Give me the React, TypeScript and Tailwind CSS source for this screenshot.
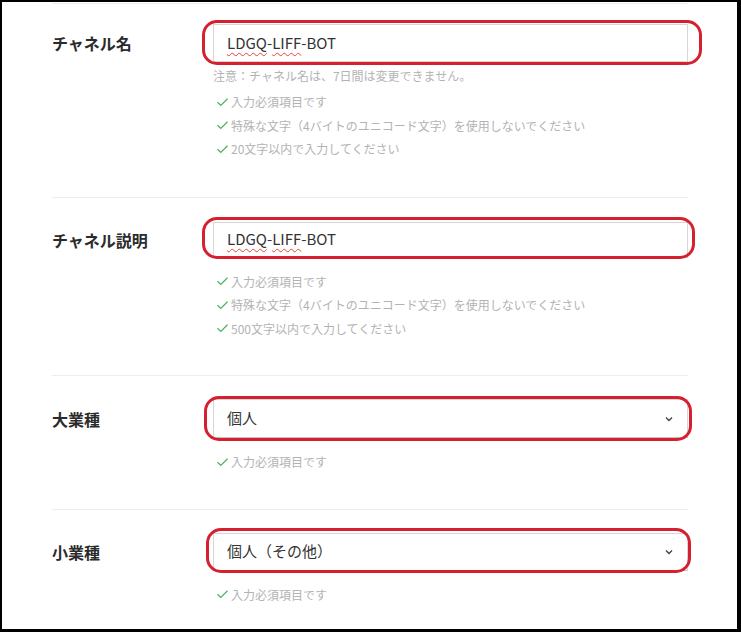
import type { ReactNode } from 'react';

function Check() {
  return (
    <svg width="13" height="12" viewBox="0 0 13 12" className="mr-[2px] shrink-0">
      <path d="M1.5 6.2 L4.8 9.4 L11.5 2.8" fill="none" stroke="#4caf61" strokeWidth="1.2" />
    </svg>
  );
}

function Hints({ items, className }: { items: string[]; className: string }) {
  return (
    <ul className={className}>
      {items.map((t) => (
        <li key={t} className="flex items-center text-[12px] leading-[23.5px] text-[#b3b3b3] pl-[3px]">
          <Check />
          {t}
        </li>
      ))}
    </ul>
  );
}

function Row({
  label,
  field,
  redClass,
  rowClass,
  labelBox,
  children,
}: {
  label: string;
  field: ReactNode;
  redClass: string;
  rowClass: string;
  labelBox: string;
  children: ReactNode;
}) {
  return (
    <div className={`flex border-t border-[#ededed] ${rowClass}`}>
      <div className="w-[161px] shrink-0">
        <div className={`flex items-center text-[16px] font-bold text-[#2b2b2b] ${labelBox}`}>{label}</div>
      </div>
      <div className="w-[475px]">
        <div className="relative">
          {field}
          <div className={`absolute rounded-[15px] border-[3px] border-[#d5202f] pointer-events-none ${redClass}`} />
        </div>
        {children}
      </div>
    </div>
  );
}

function TextBox({ h }: { h: string }) {
  return (
    <div className={`flex items-center border border-[#d6d6d6] bg-white px-[13px] text-[15px] text-[#333] ${h}`}>
      <span className="underline decoration-wavy decoration-[#e0463c] decoration-1 underline-offset-[3px]">LDGQ</span>
      -
      <span className="underline decoration-wavy decoration-[#e0463c] decoration-1 underline-offset-[3px]">LIFF</span>
      -BOT
    </div>
  );
}

function SelectBox({ h, value }: { h: string; value: string }) {
  return (
    <div className={`flex items-center justify-between border border-[#d6d6d6] border-b-[#c4c4c4] bg-white pl-[13px] pr-[14px] text-[15px] text-[#333] ${h}`}>
      <span>{value}</span>
      <svg width="8" height="6" viewBox="0 0 8 6">
        <path d="M1 1.5 L4 4.5 L7 1.5" fill="none" stroke="#444" strokeWidth="1.4" />
      </svg>
    </div>
  );
}

export default function App() {
  return (
    <div className="w-[741px] h-[632px] overflow-hidden bg-white border-t-2 border-l-2 border-r-4 border-b-[3px] border-black font-['Noto_Sans_CJK_JP','Noto_Sans',sans-serif]">
      <div className="ml-[50px] mt-px w-[636px]">
        <Row
          label="チャネル名"
          rowClass="pt-[20px] pb-[36px]"
          labelBox="h-[38px]"
          redClass="-left-[11px] -right-[14px] -top-[4px] -bottom-[3px]"
          field={<TextBox h="h-[38px]" />}
        >
          <p className="mt-[4px] text-[12px] leading-[20px] text-[#b3b3b3]">注意：チャネル名は、7日間は変更できません。</p>
          <Hints
            className="mt-[4px]"
            items={['入力必須項目です', '特殊な文字（4バイトのユニコード文字）を使用しないでください', '20文字以内で入力してください']}
          />
        </Row>
        <Row
          label="チャネル説明"
          rowClass="pt-[24px] pb-[35px]"
          labelBox="h-[36px]"
          redClass="-left-[11px] -right-[7px] -top-[5px] -bottom-[1px]"
          field={<TextBox h="h-[36px]" />}
        >
          <Hints
            className="mt-[12px]"
            items={['入力必須項目です', '特殊な文字（4バイトのユニコード文字）を使用しないでください', '500文字以内で入力してください']}
          />
        </Row>
        <Row
          label="大業種"
          rowClass="pt-[23px] pb-[35px]"
          labelBox="h-[39px]"
          redClass="-left-[9px] -right-[4px] -top-[3px] -bottom-[3px]"
          field={<SelectBox h="h-[39px]" value="個人" />}
        >
          <Hints className="mt-[12px]" items={['入力必須項目です']} />
        </Row>
        <Row
          label="小業種"
          rowClass="pt-[23px] pb-[20px]"
          labelBox="h-[38px]"
          redClass="-left-[7px] -right-[3px] -top-[5px] -bottom-[2px]"
          field={<SelectBox h="h-[38px]" value="個人（その他）" />}
        >
          <Hints className="mt-[12px]" items={['入力必須項目です']} />
        </Row>
      </div>
    </div>
  );
}
